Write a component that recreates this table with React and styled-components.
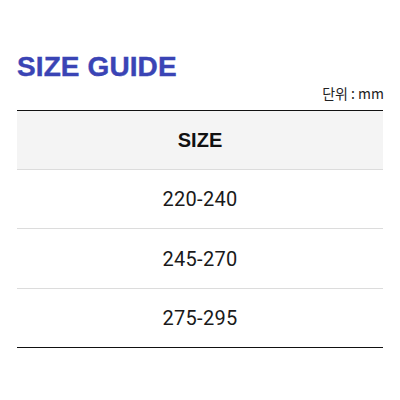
import React from "react";
import styled, { createGlobalStyle } from "styled-components";

const Global = createGlobalStyle`
  html, body { margin: 0; padding: 0; background: #fff; }
  body { font-family: "Noto Sans", "Noto Sans CJK KR", sans-serif; }
`;

const Page = styled.div`
  padding: 50px 17px 0 17px;
`;

const Title = styled.h1`
  margin: 0;
  font-family: "Liberation Sans", Arial, sans-serif;
  font-weight: 700;
  font-size: 28px;
  line-height: 34px;
  color: #3a44b5;
  letter-spacing: 0.1px;
  -webkit-text-stroke: 0.4px #3a44b5;
`;

const Unit = styled.div`
  text-align: right;
  font-family: "Noto Sans CJK KR", "Noto Sans", sans-serif;
  font-size: 14px;
  line-height: 20px;
  color: #222;
  margin-right: -1px;
  margin-top: -1px;
`;

const Table = styled.table`
  width: 100%;
  border-collapse: collapse;
  margin-top: 7px;
  border-top: 1px solid #111;
  border-bottom: 1px solid #111;
`;

const HeadCell = styled.th`
  height: 58px;
  padding: 0;
  background: #f4f4f4;
  font-family: "Liberation Sans", Arial, sans-serif;
  font-weight: 700;
  font-size: 20px;
  color: #111;
  text-align: center;
  border-bottom: 1px solid #dcdcdc;
`;

const Cell = styled.td`
  height: 58.4px;
  padding: 0;
  text-align: center;
  font-family: Roboto, "Noto Sans", sans-serif;
  font-size: 20px;
  font-weight: 400;
  letter-spacing: 0.3px;
  color: #1a1a1a;
  border-bottom: 1px solid ${(p) => (p.$last ? "#111" : "#dcdcdc")};
`;

const sizes = ["220-240", "245-270", "275-295"];

export default function App() {
  return (
    <>
      <Global />
      <Page>
        <Title>SIZE GUIDE</Title>
        <Unit>단위 : mm</Unit>
        <Table>
          <thead>
            <tr>
              <HeadCell>SIZE</HeadCell>
            </tr>
          </thead>
          <tbody>
            {sizes.map((s, i) => (
              <tr key={s}>
                <Cell $last={i === sizes.length - 1}>{s}</Cell>
              </tr>
            ))}
          </tbody>
        </Table>
      </Page>
    </>
  );
}
